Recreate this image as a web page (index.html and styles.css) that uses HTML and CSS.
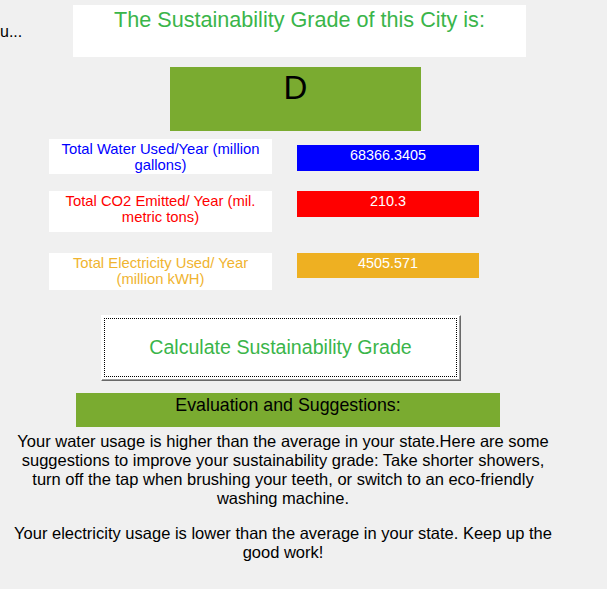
FILE: index.html
```html
<!DOCTYPE html>
<html>
<head>
<meta charset="utf-8">
<link rel="stylesheet" href="styles.css">
</head>
<body>
<div class="screen">
  <div class="header">
    <div class="clip">u...</div>
    <div class="title-box">The Sustainability Grade of this City is:</div>
  </div>
  <div class="grade">D</div>
  <div class="stats">
    <div class="row row-water">
      <div class="label label-water">Total Water Used/Year (million gallons)</div>
      <div class="value value-water">68366.3405</div>
    </div>
    <div class="row row-co2">
      <div class="label label-co2">Total CO2 Emitted/ Year (mil. metric tons)</div>
      <div class="value value-co2">210.3</div>
    </div>
    <div class="row row-elec">
      <div class="label label-elec">Total Electricity Used/ Year (million kWH)</div>
      <div class="value value-elec">4505.571</div>
    </div>
  </div>
  <button class="calc"><span class="calc-inner">Calculate Sustainability Grade</span></button>
  <div class="eval">Evaluation and Suggestions:</div>
  <div class="advice">
    <p class="para">Your water usage is higher than the average in your state.Here are some suggestions to improve your sustainability grade: Take shorter showers, turn off the tap when brushing your teeth, or switch to an eco-friendly washing machine.</p>
    <p class="para para-2">Your electricity usage is lower than the average in your state. Keep up the good work!</p>
  </div>
</div>
</body>
</html>
```
FILE: styles.css
```css
html, body {
  margin: 0;
  padding: 0;
  background: #f0f0f0;
}
body {
  width: 607px;
  height: 589px;
  overflow: hidden;
  font-family: "Liberation Sans", Arial, sans-serif;
}
.screen {
  display: flex;
  flex-direction: column;
  align-items: flex-start;
}
.header {
  display: flex;
  align-items: flex-start;
}
.clip {
  width: 73px;
  padding-top: 23px;
  font-size: 16px;
  line-height: 18px;
  color: #000;
}
.title-box {
  margin-top: 5px;
  width: 453px;
  height: 52px;
  box-sizing: border-box;
  padding-top: 3px;
  background: #fff;
  color: #3ab54a;
  font-size: 21.6px;
  line-height: 24px;
  text-align: center;
}
.grade {
  margin: 10px 0 0 170px;
  width: 251px;
  height: 64px;
  box-sizing: border-box;
  padding-top: 2px;
  background: #7aab30;
  color: #000;
  font-size: 33px;
  line-height: 38px;
  text-align: center;
}
.stats {
  margin-left: 49px;
  display: flex;
  flex-direction: column;
}
.row {
  display: flex;
  align-items: flex-start;
  gap: 25px;
}
.row-water { margin-top: 8px; }
.row-co2 { margin-top: 17px; }
.row-elec { margin-top: 21px; }
.label {
  width: 223px;
  box-sizing: border-box;
  padding-top: 2px;
  background: #fff;
  font-size: 14.8px;
  line-height: 16px;
  text-align: center;
}
.label-water { height: 35px; color: #0000ff; }
.label-co2 { height: 41px; color: #ff0000; }
.label-elec { height: 37px; color: #f0b430; }
.value {
  width: 182px;
  box-sizing: border-box;
  padding-top: 2px;
  color: #fff;
  font-size: 14.4px;
  line-height: 16px;
  text-align: center;
}
.value-water { margin-top: 6px; height: 26px; background: #0000ff; }
.value-co2 { height: 26px; background: #ff0000; }
.value-elec { height: 25px; background: #eeb022; }
.calc {
  margin: 25px 0 0 101px;
  width: 360px;
  height: 66px;
  padding: 0;
  box-sizing: border-box;
  background: #fff;
  border: 1px solid;
  border-color: #ffffff #696969 #696969 #ffffff;
  box-shadow: inset -1px -1px 0 #a0a0a0;
  font-family: "Liberation Sans", Arial, sans-serif;
  font-size: 19.6px;
  line-height: 23px;
  color: #3ab54a;
  display: flex;
  align-items: stretch;
}
.calc-inner {
  flex: 1;
  margin: 2px 3px 3px 2px;
  border: 1px dotted #000;
  display: flex;
  align-items: center;
  justify-content: center;
}
.eval {
  margin: 12px 0 0 76px;
  width: 424px;
  height: 34px;
  box-sizing: border-box;
  padding-top: 2px;
  background: #7aab30;
  color: #000;
  font-size: 17.8px;
  line-height: 20px;
  text-align: center;
}
.advice {
  margin: 5px 0 0 8px;
  width: 550px;
}
.para {
  margin: 0;
  font-size: 16.5px;
  line-height: 19px;
  text-align: center;
  color: #000;
}
.para-2 {
  margin-top: 16px;
}
```
